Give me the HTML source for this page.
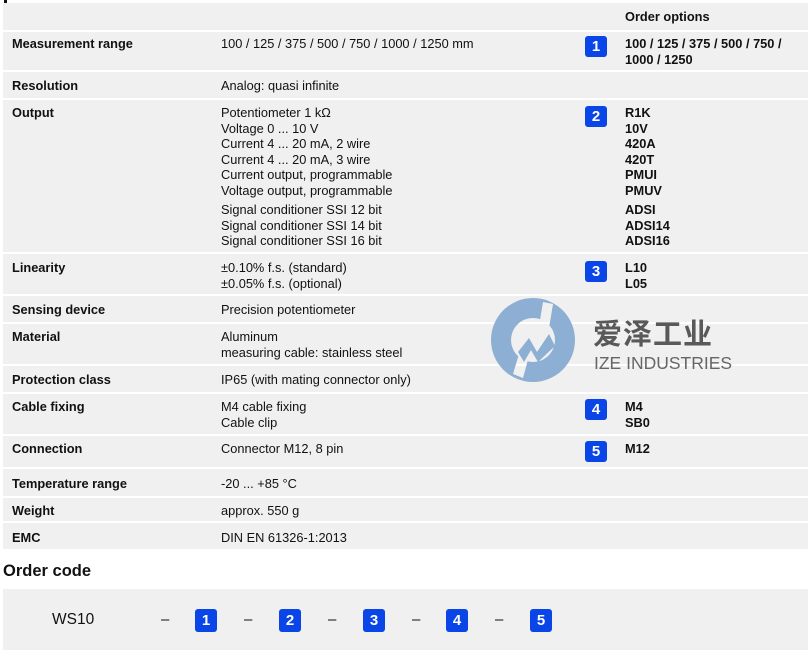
<!DOCTYPE html>
<html><head><meta charset="utf-8"><style>
*{margin:0;padding:0}
body{width:812px;height:654px;background:#fff;position:relative;overflow:hidden;font-family:"Liberation Sans",Arial,sans-serif;font-size:12.8px;color:#111}
.r{position:absolute;left:3px;width:805px;background:#f0f0f0}
.t{position:absolute;white-space:nowrap;line-height:15.5px}
.b{font-weight:bold}
.l{left:12px}.v{left:221px}.o{left:625px}
.n{position:absolute;width:22px;height:21px;background:#0a45e8;border-radius:3px;color:#fff;font-weight:bold;font-size:15px;line-height:21px;text-align:center}
</style></head><body>
<div style="position:absolute;left:4px;top:0;width:3px;height:3px;background:#111"></div>
<div class="r" style="top:3px;height:27px"></div>
<div class="r" style="top:32px;height:38px"></div>
<div class="r" style="top:72px;height:26px"></div>
<div class="r" style="top:100px;height:152px"></div>
<div class="r" style="top:254px;height:40px"></div>
<div class="r" style="top:296px;height:26px"></div>
<div class="r" style="top:324px;height:40px"></div>
<div class="r" style="top:366px;height:26px"></div>
<div class="r" style="top:394px;height:40px"></div>
<div class="r" style="top:436px;height:31px"></div>
<div class="r" style="top:469px;height:27px"></div>
<div class="r" style="top:498px;height:23px"></div>
<div class="r" style="top:523px;height:26px"></div>
<div class="r" style="top:589px;height:61px"></div>

<svg style="position:absolute;left:491px;top:298px" width="86" height="86" viewBox="0 0 86 86">
<defs><mask id="m"><rect width="86" height="86" fill="#fff"/>
<circle cx="42" cy="42" r="22" fill="#000"/>
<polygon points="52,4 62,6 58,30 48,28" fill="#000"/>
<polygon points="22,76 32,80 38,58 28,56" fill="#000"/>
</mask></defs>
<circle cx="42" cy="42" r="42" fill="#8cafd3" mask="url(#m)"/>
<polygon points="27,54 38,40 46,54 58,36 64,48 47,64 40,52 33,64" fill="#8cafd3"/>
</svg>
<div class="t" style="left:593px;top:314px;font-family:'Noto Sans CJK SC',sans-serif;font-weight:bold;font-size:29px;line-height:36px;color:#595959;letter-spacing:1px">爱泽工业</div>
<div class="t" style="left:594px;top:353px;font-size:17.5px;line-height:20px;color:#666">IZE INDUSTRIES</div>

<div class="t b o" style="top:9px">Order options</div>

<div class="t b l" style="top:36px">Measurement range</div>
<div class="t v" style="top:36px">100 / 125 / 375 / 500 / 750 / 1000 / 1250 mm</div>
<div class="n" style="left:585px;top:36px">1</div>
<div class="t b o" style="top:36px">100 / 125 / 375 / 500 / 750 /<br>1000 / 1250</div>

<div class="t b l" style="top:78px">Resolution</div>
<div class="t v" style="top:78px">Analog: quasi infinite</div>

<div class="t b l" style="top:105px">Output</div>
<div class="t v" style="top:105px">Potentiometer 1 kΩ<br>Voltage 0 ... 10 V<br>Current 4 ... 20 mA, 2 wire<br>Current 4 ... 20 mA, 3 wire<br>Current output, programmable<br>Voltage output, programmable</div>
<div class="t v" style="top:202px">Signal conditioner SSI 12 bit<br>Signal conditioner SSI 14 bit<br>Signal conditioner SSI 16 bit</div>
<div class="n" style="left:585px;top:106px">2</div>
<div class="t b o" style="top:105px">R1K<br>10V<br>420A<br>420T<br>PMUI<br>PMUV</div>
<div class="t b o" style="top:202px">ADSI<br>ADSI14<br>ADSI16</div>

<div class="t b l" style="top:260px">Linearity</div>
<div class="t v" style="top:260px">±0.10% f.s. (standard)<br>±0.05% f.s. (optional)</div>
<div class="n" style="left:585px;top:261px">3</div>
<div class="t b o" style="top:260px">L10<br>L05</div>

<div class="t b l" style="top:302px">Sensing device</div>
<div class="t v" style="top:302px">Precision potentiometer</div>

<div class="t b l" style="top:329px">Material</div>
<div class="t v" style="top:329px">Aluminum<br>measuring cable: stainless steel</div>

<div class="t b l" style="top:372px">Protection class</div>
<div class="t v" style="top:372px">IP65 (with mating connector only)</div>

<div class="t b l" style="top:399px">Cable fixing</div>
<div class="t v" style="top:399px">M4 cable fixing<br>Cable clip</div>
<div class="n" style="left:585px;top:399px">4</div>
<div class="t b o" style="top:399px">M4<br>SB0</div>

<div class="t b l" style="top:441px">Connection</div>
<div class="t v" style="top:441px">Connector M12, 8 pin</div>
<div class="n" style="left:585px;top:441px">5</div>
<div class="t b o" style="top:441px">M12</div>

<div class="t b l" style="top:476px">Temperature range</div>
<div class="t v" style="top:476px">-20 ... +85 °C</div>
<div class="t b l" style="top:503px">Weight</div>
<div class="t v" style="top:503px">approx. 550 g</div>
<div class="t b l" style="top:530px">EMC</div>
<div class="t v" style="top:530px">DIN EN 61326-1:2013</div>

<div class="t b" style="left:3px;top:561px;font-size:16.5px;line-height:20px">Order code</div>
<div class="t" style="left:52px;top:610px;font-size:15.5px;line-height:20px">WS10</div>
<div class="t" style="left:161px;top:610px;font-size:15px;line-height:20px">–</div>
<div class="n" style="left:195px;top:609px;height:23px;line-height:23px">1</div>
<div class="t" style="left:244px;top:610px;font-size:15px;line-height:20px">–</div>
<div class="n" style="left:279px;top:609px;height:23px;line-height:23px">2</div>
<div class="t" style="left:328px;top:610px;font-size:15px;line-height:20px">–</div>
<div class="n" style="left:363px;top:609px;height:23px;line-height:23px">3</div>
<div class="t" style="left:412px;top:610px;font-size:15px;line-height:20px">–</div>
<div class="n" style="left:446px;top:609px;height:23px;line-height:23px">4</div>
<div class="t" style="left:495px;top:610px;font-size:15px;line-height:20px">–</div>
<div class="n" style="left:530px;top:609px;height:23px;line-height:23px">5</div>
</body></html>
